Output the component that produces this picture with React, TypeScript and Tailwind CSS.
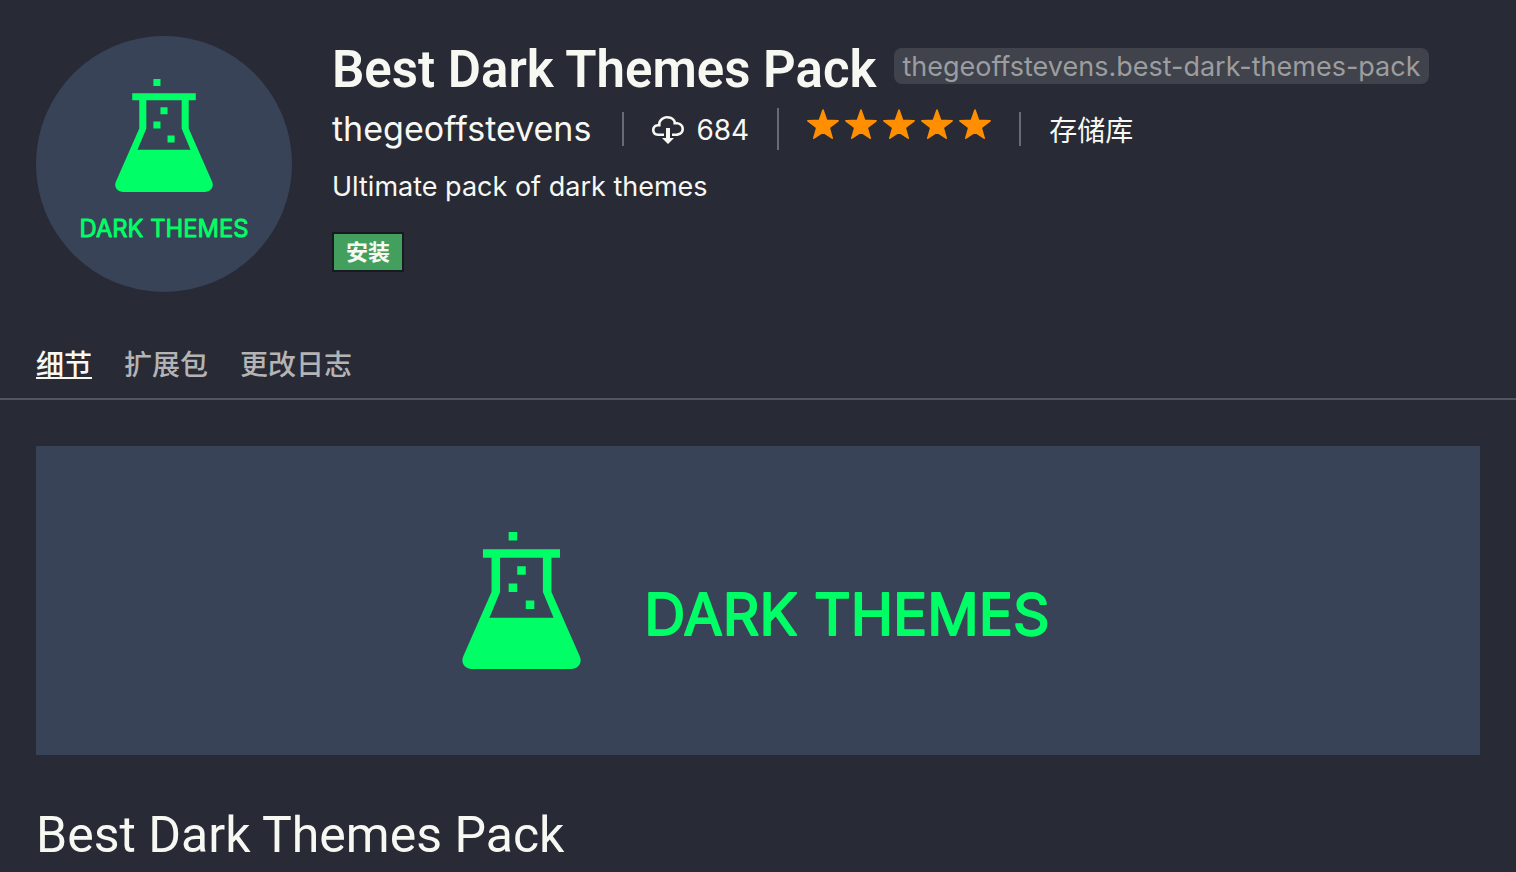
import React from "react";

const PALETTE = { logo: "#00ff66" };

function Flask({ className }: { className: string }) {
  return (
    <svg viewBox="0 0 13.8 16" className={className} fill={PALETTE.logo} aria-hidden="true">
      <path d="M5.4 0h1v1h-1zM6.4 4h1v1h-1zM5.4 6h1v1h-1zM7.4 8h1v1h-1z" />
      <path
        fillRule="evenodd"
        d="M2.4 2h9v1h-1v4l3.3 7.5c.35.8-.2 1.5-1 1.5H1.1c-.8 0-1.35-.7-1-1.5L3.4 7V3h-1zM4.4 3v4L3.15 10h7.5L9.4 7V3z"
      />
    </svg>
  );
}

function Wordmark({ className }: { className: string }) {
  return (
    <svg viewBox="0 0 416 72" className={className} role="img" aria-label="Dark Themes">
      <text
        x="208"
        y="56"
        textAnchor="middle"
        fontFamily="Inter, sans-serif"
        fontSize="57"
        fontWeight="400"
        fill={PALETTE.logo}
        stroke={PALETTE.logo}
        strokeWidth="2"
        strokeLinejoin="round"
      >
        DARK THEMES
      </text>
    </svg>
  );
}

function CloudDownload() {
  return (
    <svg viewBox="0 0 16 16" className="size-8" fill="currentColor" aria-hidden="true">
      <path d="M9 12h2l-3 3-3-3h2V7h2v5zm3-8c0-.44-.91-3-4.5-3C5.08 1 3 2.92 3 5 1.02 5 0 6.52 0 8c0 1.53 1 3 3 3h3V9.7H3C1.38 9.7 1.3 8.28 1.3 8c0-.17.05-1.7 1.7-1.7h1.3V5c0-1.39 1.56-2.7 3.2-2.7 2.55 0 3.13 1.55 3.2 1.8v1.2H12c.81 0 2.7.22 2.7 2.2 0 2.09-2.25 2.2-2.7 2.2h-2V11h2c2.08 0 4-1.16 4-3.5C16 5.06 14.08 4 12 4z" />
    </svg>
  );
}

function Star() {
  return (
    <svg viewBox="0 0 32 32" className="size-8" fill="#ff8e00" stroke="#ff8e00" aria-hidden="true">
      <path
        strokeWidth="1.6"
        strokeLinejoin="round"
        d="M16 2l3.6 10.2 11.5.6-8.9 6.8 3 10.6L16 24.1l-9.2 6.1 3-10.6L.9 12.8l11.5-.6z"
      />
    </svg>
  );
}

const tabs = ["细节", "扩展包", "更改日志"];

export default function App() {
  return (
    <div className="min-h-screen bg-[#282a36] font-['Inter','Noto_Sans_CJK_SC',sans-serif] text-[#f8f8f2]">
      <header className="flex gap-10 px-9 pt-9">
        <div className="flex size-64 shrink-0 flex-col items-center rounded-full bg-[#394357] pt-[43px]">
          <Flask className="h-[113px] w-[98px]" />
          <Wordmark className="mt-[22px] h-[30px] w-[174px]" />
        </div>
        <div className="min-w-0 pt-1">
          <div className="flex items-start gap-[18px]">
            <h1 className="font-['Roboto',sans-serif] text-[51px] leading-[60px] font-semibold whitespace-nowrap">
              Best Dark Themes Pack
            </h1>
            <span className="mt-2 rounded-lg bg-[#40424c] px-2 pt-0.5 text-[27px] leading-[34px] whitespace-nowrap text-[#9c9d9f]">
              thegeoffstevens.best-dark-themes-pack
            </span>
          </div>
          <div className="mt-2 flex h-[42px] items-center">
            <a href="#publisher" className="pr-[31px] text-[34px] leading-10">
              thegeoffstevens
            </a>
            <span className="flex h-[34px] items-center gap-3 border-l-2 border-[#6a6b72] px-7 pt-0.5 text-[28px]">
              <CloudDownload />
              684
            </span>
            <span
              role="img"
              aria-label="5 / 5"
              className="flex h-[42px] items-start gap-1.5 border-l-2 border-[#6a6b72] px-7"
            >
              <Star />
              <Star />
              <Star />
              <Star />
              <Star />
            </span>
            <a href="#repository" className="flex h-[34px] items-center border-l-2 border-[#6a6b72] pt-1 pl-7 text-[28px]">
              存储库
            </a>
          </div>
          <p className="mt-4 text-[27px] leading-[42px]">Ultimate pack of dark themes</p>
          <button className="mt-6 flex h-10 items-center border-2 border-[#191a21] bg-[#429f5e] px-3 text-[22px] font-bold">
            安装
          </button>
        </div>
      </header>
      <nav className="mt-[50px] flex h-[58px] gap-8 border-b-2 border-[#53545e] px-9 text-[28px] leading-[46px] font-medium">
        {tabs.map((tab, i) => (
          <a
            key={tab}
            href="#tab"
            className={i === 0 ? "underline decoration-2 underline-offset-2" : "text-[#b4b4b4]"}
          >
            {tab}
          </a>
        ))}
      </nav>
      <main className="px-9 pt-[46px]">
        <div className="flex h-[309px] items-center justify-center gap-[58px] bg-[#394357]">
          <Flask className="h-[137px] w-[119px]" />
          <Wordmark className="mt-7 h-[72px] w-[416px]" />
        </div>
        <h2 className="mt-12 font-['Roboto',sans-serif] text-[50px] leading-[64px] whitespace-nowrap">
          Best Dark Themes Pack
        </h2>
      </main>
    </div>
  );
}
